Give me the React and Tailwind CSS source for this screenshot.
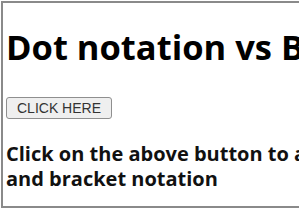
export default function App() {
  return (
    <div className="w-[300px] h-[210px] bg-white overflow-hidden p-[1px]">
      <div
        className="h-[207px] border-l-2 border-t-2 border-b-2 border-[#8a8a8a] pl-[3px] overflow-hidden whitespace-nowrap"
        style={{ fontFamily: '"Open Sans", "Noto Sans", sans-serif' }}
      >
        <h1 className="text-[34.5px] font-bold text-black leading-[44px] mt-[22px]">
          Dot notation vs Bracket notation
        </h1>
        <button
          className="mt-[28px] h-[22px] px-[10px] border border-[#8f8f8f] rounded-[3px] bg-[#efefef] text-[14px] text-[#333] leading-none"
          style={{ fontFamily: '"Liberation Sans", Arial, sans-serif' }}
        >
          CLICK HERE
        </button>
        <p className="mt-[22px] text-[20px] font-bold text-[#111] leading-[25px]">
          Click on the above button to access dot notation
          <br />
          and bracket notation
        </p>
      </div>
    </div>
  )
}
